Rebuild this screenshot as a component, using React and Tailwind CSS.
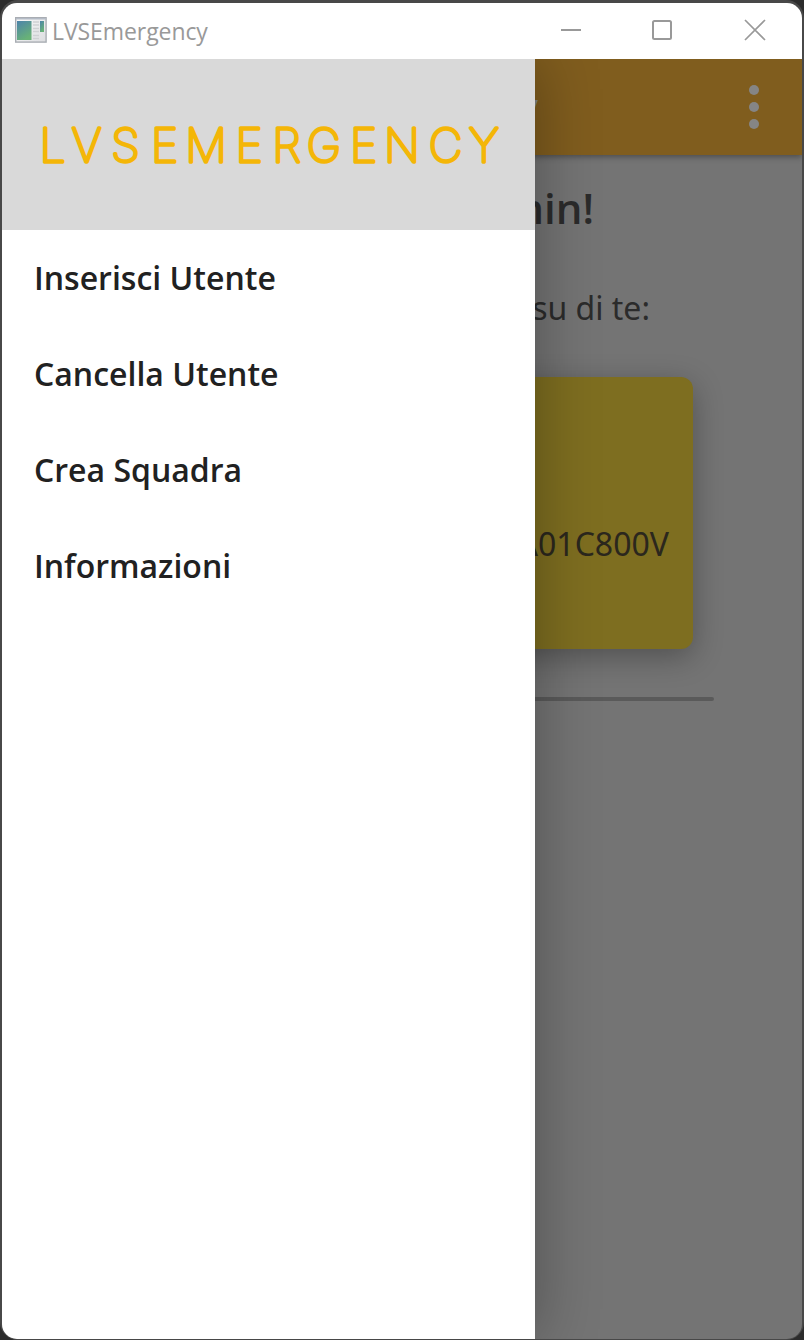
const menuItems = ["Inserisci Utente", "Cancella Utente", "Crea Squadra", "Informazioni"];

function AppIcon() {
  return (
    <svg width="32" height="26" viewBox="0 0 32 26" className="mb-[2px] shrink-0">
      <defs>
        <linearGradient id="pane" x1="0" y1="0" x2="0.5" y2="1">
          <stop offset="0" stopColor="#4c83ab" />
          <stop offset="1" stopColor="#68b277" />
        </linearGradient>
        <linearGradient id="frame" x1="0" y1="0" x2="1" y2="1">
          <stop offset="0" stopColor="#fafafa" />
          <stop offset="1" stopColor="#dcdde0" />
        </linearGradient>
      </defs>
      <rect x="0.7" y="0.7" width="30.4" height="24.4" fill="url(#frame)" stroke="#a9adb3" strokeWidth="1.4" />
      <path d="M1 1.8H31" stroke="#b4bbc6" strokeWidth="1.6" />
      <rect x="2" y="4" width="14.5" height="19" fill="url(#pane)" />
      <rect x="25" y="4" width="4" height="11" fill="url(#pane)" />
      <path d="M18 5H24M18 8H24M18 11.5H24M18 14.5H24M18 18.5H24M18 21.5H24" stroke="#cfd1d3" strokeWidth="1.3" />
    </svg>
  );
}

function TitleBar() {
  return (
    <header className="flex h-14 shrink-0 items-center bg-white pl-[13px] text-[#999999]">
      <AppIcon />
      <span className="mb-[1px] ml-[5px] font-['Open_Sans',sans-serif] text-[23px] leading-8 font-normal tracking-[-0.08px]">LVSEmergency</span>
      <div className="mr-[36px] mb-[2px] ml-auto flex items-center">
        <svg width="22" height="22" viewBox="0 0 22 22" fill="none" stroke="#999" strokeWidth="2" className="mr-[69px]"><path d="M1 11H21" /></svg>
        <svg width="22" height="22" viewBox="0 0 22 22" fill="none" stroke="#999" strokeWidth="2" className="mr-[71px]"><rect x="2" y="2" width="18" height="18" rx="1.5" /></svg>
        <svg width="22" height="22" viewBox="0 0 22 22" fill="none" stroke="#999" strokeWidth="1.7"><path d="M1 1L21 21M21 1L1 21" /></svg>
      </div>
    </header>
  );
}

function Home() {
  return (
    <main className="flex h-full flex-col bg-[#747474] text-[#2b2b2b]">
      <div className="z-0 flex h-24 shrink-0 items-center bg-[#805d1e] text-[#858585] shadow-[0_2px_6px_rgba(0,0,0,0.35)]">
        <span className="w-[536px] text-right text-[40px] font-medium">LVSEmergency</span>
        <svg width="12" height="46" viewBox="0 0 12 46" fill="#858585" className="mr-[42px] ml-auto">
          <circle cx="6" cy="6" r="5" />
          <circle cx="6" cy="23" r="5" />
          <circle cx="6" cy="40" r="5" />
        </svg>
      </div>
      <h1 className="mt-[23px] w-[592px] text-right font-['Open_Sans',sans-serif] text-[42px] leading-[60px] font-semibold">Benvenuto Admin!</h1>
      <p className="mt-[48px] w-[648px] text-right text-[32px] leading-[44px]">Ecco i dati su di te:</p>
      <section className="mx-auto mt-[47px] flex h-[272px] w-[582px] shrink-0 items-center justify-end rounded-[12px] bg-[#7e6e20] pt-[62px] pr-[24px] shadow-[0_8px_30px_rgba(0,0,0,0.3)]">
        <span className="text-[32px] leading-[44px] text-[#2b271d]">AAAAAA00A01C800V</span>
      </section>
      <div className="mx-auto mt-[48px] h-1 w-[624px] shrink-0 rounded-[2px] bg-[#5a5a5a]" />
    </main>
  );
}

function Drawer() {
  return (
    <aside className="absolute inset-y-0 left-0 flex w-[533px] flex-col bg-white shadow-[0_0_60px_rgba(0,0,0,0.32)]">
      <div className="flex h-[171px] shrink-0 items-center bg-[#d9d9d9]">
        <svg width="533" height="60" viewBox="0 0 533 60">
          <text
            x="50.5 84.5 123.5 162.5 204 247 284.5 322 361.5 400 443.5 482"
            y="46.6"
            textAnchor="middle"
            fill="#f4b607"
            stroke="#f4b607"
            strokeWidth="3.4"
            strokeLinejoin="round"
            strokeLinecap="round"
            className="font-['Inter',sans-serif] text-[46.5px] font-thin"
          >
            LVSEMERGENCY
          </text>
        </svg>
      </div>
      <nav className="flex flex-col">
        {menuItems.map((item) => (
          <a key={item} className="flex h-24 items-center pl-8 font-['Open_Sans',sans-serif] text-[32px] font-semibold text-[#212121]">{item}</a>
        ))}
      </nav>
    </aside>
  );
}

export default function App() {
  return (
    <div className="h-[1340px] w-[804px] bg-[#2c2c2c] font-['Noto_Sans',sans-serif]">
      <div className="h-full rounded-[18px] bg-[#484848] px-[2px] pt-[3px] pb-px">
        <div className="flex h-full flex-col overflow-hidden rounded-[15px]">
          <TitleBar />
          <div className="relative min-h-0 flex-1 overflow-hidden">
            <Home />
            <Drawer />
          </div>
        </div>
      </div>
    </div>
  );
}
